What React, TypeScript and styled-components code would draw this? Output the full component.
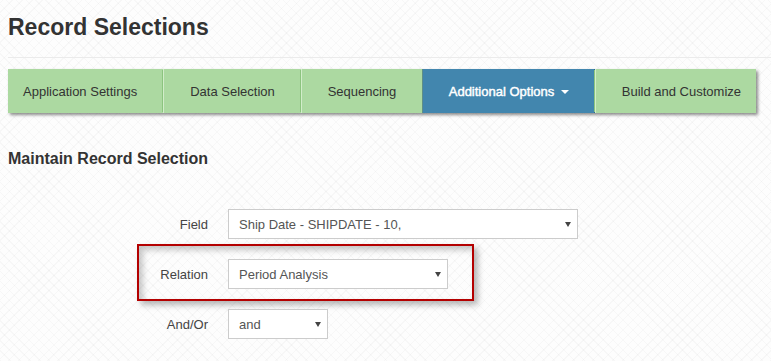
import React from "react";
import styled, { createGlobalStyle } from "styled-components";

const GlobalStyle = createGlobalStyle`
  html, body {
    margin: 0;
    padding: 0;
  }
  body {
    font-family: "Liberation Sans", Arial, sans-serif;
    color: #333;
    background-color: #fdfdfd;
    background-image:
      repeating-linear-gradient(45deg, rgba(0,0,0,0.022) 0 1px, transparent 1px 7px),
      repeating-linear-gradient(-45deg, rgba(0,0,0,0.022) 0 1px, transparent 1px 7px);
    min-height: 361px;
    overflow: hidden;
  }
`;

const Page = styled.div`
  padding: 13px 0 0 8px;
`;

const Title = styled.h1`
  margin: 0;
  font-size: 23px;
  line-height: 28px;
  font-weight: bold;
  color: #333;
`;

const Rule = styled.hr`
  margin: 16px 0 0 0;
  border: 0;
  border-top: 1px solid #ebebeb;
  height: 0;
`;

const Nav = styled.nav`
  display: flex;
  width: 748px;
  height: 44px;
  margin-top: 11px;
  background: #acd9a1;
  box-shadow: 2px 2px 3px rgba(0, 0, 0, 0.45);
`;

type TabProps = { $w: number; $active?: boolean; $align?: "start" | "center" | "end"; $edge?: boolean };

const Tab = styled.div<TabProps>`
  box-sizing: border-box;
  width: ${(p) => p.$w}px;
  flex: none;
  display: flex;
  align-items: center;
  justify-content: ${(p) => (p.$align === "start" ? "flex-start" : p.$align === "end" ? "flex-end" : "center")};
  padding: 0 15px;
  font-size: 13px;
  color: ${(p) => (p.$active ? "#fff" : "#333")};
  font-weight: normal;
  -webkit-text-stroke: ${(p) => (p.$active ? "0.45px #fff" : "0")};
  background: ${(p) => (p.$active ? "#4286ae" : "transparent")};
  border-left: ${(p) =>
    p.$edge ? "none" : p.$active ? "1px solid #5f8f86" : "1px solid #d2edca"};
  box-shadow: ${(p) => (p.$edge || p.$active ? "none" : "-2px 0 0 -1px #8cc47f")};
  white-space: nowrap;
  position: relative;
  &:after {
    content: "";
    display: ${(p) => (p.$active ? "block" : "none")};
    position: absolute;
    right: 0;
    top: 0;
    bottom: 0;
    width: 1px;
    background: #2c6a90;
  }
`;

const Caret = styled.span`
  display: inline-block;
  width: 0;
  height: 0;
  margin-left: 7px;
  margin-top: 1px;
  border-top: 4px solid #fff;
  border-left: 4px solid transparent;
  border-right: 4px solid transparent;
`;

const Section = styled.h2`
  margin: 36px 0 0 0;
  font-size: 16px;
  line-height: 20px;
  font-weight: bold;
  color: #333;
`;

const Form = styled.div`
  display: flex;
  flex-direction: column;
  gap: 20px;
  margin-top: 40px;
`;

const Row = styled.div`
  position: relative;
  display: flex;
  align-items: center;
  gap: 20px;
`;

const Label = styled.label`
  width: 200px;
  text-align: right;
  font-size: 13px;
  color: #444;
`;

const SelectWrap = styled.div<{ $w: number }>`
  position: relative;
  width: ${(p) => p.$w}px;
  &:after {
    content: "";
    position: absolute;
    right: 7px;
    top: 13px;
    width: 0;
    height: 0;
    border-top: 5px solid #444;
    border-left: 3.5px solid transparent;
    border-right: 3.5px solid transparent;
    pointer-events: none;
  }
`;

const Select = styled.select`
  appearance: none;
  -webkit-appearance: none;
  box-sizing: border-box;
  width: 100%;
  height: 30px;
  margin: 0;
  padding: 0 20px 0 10px;
  border: 1px solid #cccccc;
  border-radius: 0;
  background: #fff;
  font-family: "Liberation Sans", Arial, sans-serif;
  font-size: 13px;
  color: #555;
  outline: none;
`;

const Highlight = styled.div`
  position: absolute;
  left: 129px;
  top: -15px;
  width: 337px;
  height: 57px;
  box-sizing: border-box;
  border: 2px solid #b40000;
  box-shadow: 4px 4px 6px rgba(0, 0, 0, 0.28), inset 4px 4px 6px rgba(0, 0, 0, 0.22);
  pointer-events: none;
`;

export default function App() {
  return (
    <>
      <GlobalStyle />
      <Page>
        <Title>Record Selections</Title>
        <Rule />
        <Nav>
          <Tab $w={155} $align="start" $edge>
            Application Settings
          </Tab>
          <Tab $w={138}>Data Selection</Tab>
          <Tab $w={121}>Sequencing</Tab>
          <Tab $w={173} $active>
            Additional Options
            <Caret />
          </Tab>
          <Tab $w={161} $align="end">
            Build and Customize
          </Tab>
        </Nav>
        <Section>Maintain Record Selection</Section>
        <Form>
          <Row>
            <Label>Field</Label>
            <SelectWrap $w={350}>
              <Select defaultValue="ship">
                <option value="ship">Ship Date - SHIPDATE - 10,</option>
              </Select>
            </SelectWrap>
          </Row>
          <Row>
            <Label>Relation</Label>
            <SelectWrap $w={220}>
              <Select defaultValue="period">
                <option value="period">Period Analysis</option>
              </Select>
            </SelectWrap>
            <Highlight />
          </Row>
          <Row>
            <Label>And/Or</Label>
            <SelectWrap $w={100}>
              <Select defaultValue="and">
                <option value="and">and</option>
              </Select>
            </SelectWrap>
          </Row>
        </Form>
      </Page>
    </>
  );
}
